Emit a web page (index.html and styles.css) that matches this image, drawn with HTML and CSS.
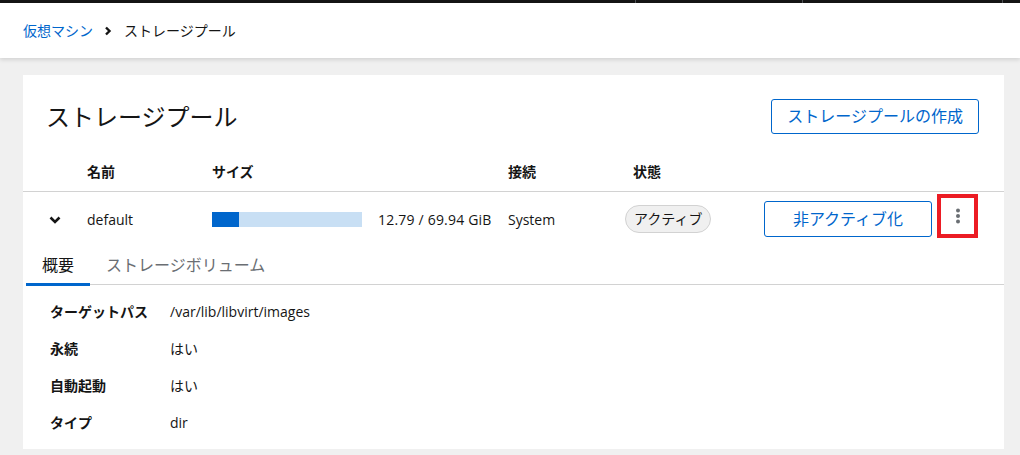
FILE: index.html
```html
<!DOCTYPE html>
<html lang="ja">
<head>
<meta charset="utf-8">
<link rel="stylesheet" href="styles.css">
</head>
<body>
<div class="topbar">
  <span class="seg seg1"></span><span class="seg seg2"></span><span class="seg seg3"></span><span class="seg seg4"></span>
</div>
<header class="crumbs">
  <a class="crumb-link">仮想マシン</a>
  <svg class="crumb-sep" width="8" height="10" viewBox="0 0 8 10"><polyline points="2,1.5 5.5,5 2,8.5" fill="none" stroke="#151515" stroke-width="2.4"/></svg>
  <span class="crumb-current">ストレージプール</span>
</header>
<main class="main">
  <section class="card">
    <div class="card-head">
      <h1 class="title">ストレージプール</h1>
      <button class="btn btn-secondary btn-create">ストレージプールの作成</button>
    </div>
    <div class="grid grid-head">
      <div></div>
      <div>名前</div>
      <div>サイズ</div>
      <div>接続</div>
      <div>状態</div>
      <div></div>
    </div>
    <div class="grid grid-row">
      <div class="toggle">
        <svg width="12" height="8" viewBox="0 0 12 8"><polyline points="1.5,1.5 6,6 10.5,1.5" fill="none" stroke="#151515" stroke-width="2.6"/></svg>
      </div>
      <div>default</div>
      <div class="size">
        <div class="bar"><div class="bar-fill" style="width:18%"></div></div>
        <span class="size-text">12.79 / 69.94 GiB</span>
      </div>
      <div>System</div>
      <div><span class="badge">アクティブ</span></div>
      <div class="actions">
        <button class="btn btn-secondary btn-deact">非アクティブ化</button>
        <div class="kebab-box">
          <svg width="6" height="16" viewBox="0 0 6 16"><circle cx="3" cy="2.5" r="2" fill="#6a6e73"/><circle cx="3" cy="8" r="2" fill="#6a6e73"/><circle cx="3" cy="13.5" r="2" fill="#6a6e73"/></svg>
        </div>
      </div>
    </div>
    <div class="expanded">
      <nav class="tabs">
        <span class="tab tab-active">概要</span>
        <span class="tab">ストレージボリューム</span>
      </nav>
      <dl class="details">
        <dt>ターゲットパス</dt><dd>/var/lib/libvirt/images</dd>
        <dt>永続</dt><dd>はい</dd>
        <dt>自動起動</dt><dd>はい</dd>
        <dt>タイプ</dt><dd>dir</dd>
      </dl>
    </div>
  </section>
</main>
</body>
</html>
```

FILE: styles.css
```css
* { box-sizing: border-box; }
html, body { margin: 0; padding: 0; }
body {
  background: #f0f0f0;
  font-family: "Open Sans", "Noto Sans CJK JP", sans-serif;
  font-size: 14px;
  color: #151515;
  width: 1020px;
  height: 455px;
  overflow: hidden;
}
.topbar { height: 3px; background: #151515; display: flex; }
.seg { height: 3px; border-right: 1px solid #4f5255; }
.seg1 { width: 636px; }
.seg2 { width: 167px; }
.seg3 { width: 200px; }
.seg4 { flex: 1; border-right: none; }

.crumbs {
  height: 55px;
  background: #fff;
  display: flex;
  align-items: center;
  padding: 0 23px;
  box-shadow: 0 2px 4px rgba(3, 3, 3, 0.12);
  position: relative;
  line-height: 21px;
}
.crumb-link { color: #0066cc; }
.crumb-sep { margin: 1px 12px 0 11px; }
.crumb-current { color: #151515; }

.main { padding: 17px 16px 0 23px; }
.card { background: #fff; height: 374px; }
.card-head {
  display: flex;
  justify-content: space-between;
  align-items: center;
  padding: 24px 25px 0 23px;
}
.title {
  margin: 0;
  font-size: 24px;
  font-weight: 400;
  line-height: 35px;
}
.btn {
  font-family: inherit;
  font-size: 16px;
  background: #fff;
  border-radius: 3px;
  cursor: pointer;
}
.btn-secondary { color: #0066cc; border: 1px solid #0066cc; }
.btn-create { height: 35px; padding: 0 15px; line-height: 33px; }

.grid {
  display: grid;
  grid-template-columns: 64px 125px 296px 125px 1fr auto;
  align-items: center;
}
.grid-head {
  height: 58px;
  align-items: end;
  padding-bottom: 9px;
  font-weight: 700;
  line-height: 21px;
  border-bottom: 1px solid #d2d2d2;
}
.grid-row { height: 54px; padding-top: 0; }
.toggle { display: flex; justify-content: center; width: 64px; padding-top: 2px; }
.size { display: flex; align-items: center; gap: 16px; }
.size-text { letter-spacing: 0.2px; }
.bar { width: 150px; height: 15px; background: #c8dff4; }
.bar-fill { height: 100%; background: #0066cc; }
.badge {
  display: inline-block;
  margin-left: -8px;
  height: 28px;
  line-height: 26px;
  padding: 0 8px;
  border: 1px solid #d2d2d2;
  border-radius: 14px;
  background: #f0f0f0;
}
.actions { display: flex; align-items: center; gap: 5px; padding-right: 26px; }
.btn-deact { width: 168px; height: 36px; line-height: 34px; padding: 0; }
.kebab-box {
  width: 41px;
  height: 44px;
  margin-top: -6px;
  border: 4px solid #ec1c24;
  display: flex;
  align-items: center;
  justify-content: center;
}

.expanded { padding-left: 3px; }
.tabs {
  display: flex;
  border-bottom: 1px solid #d2d2d2;
  height: 39px;
}
.tab {
  font-size: 16px;
  line-height: 24px;
  padding: 7px 16px 0;
  color: #6a6e73;
  height: 39px;
}
.tab-active { color: #151515; border-bottom: 3px solid #0066cc; margin-bottom: -1px; height: 40px; }
.details {
  margin: 0;
  padding: 16px 24px;
  display: grid;
  grid-template-columns: 120px 1fr;
  row-gap: 16px;
  line-height: 21px;
}
.details dt { font-weight: 700; }
.details dd { margin: 0; }
```
